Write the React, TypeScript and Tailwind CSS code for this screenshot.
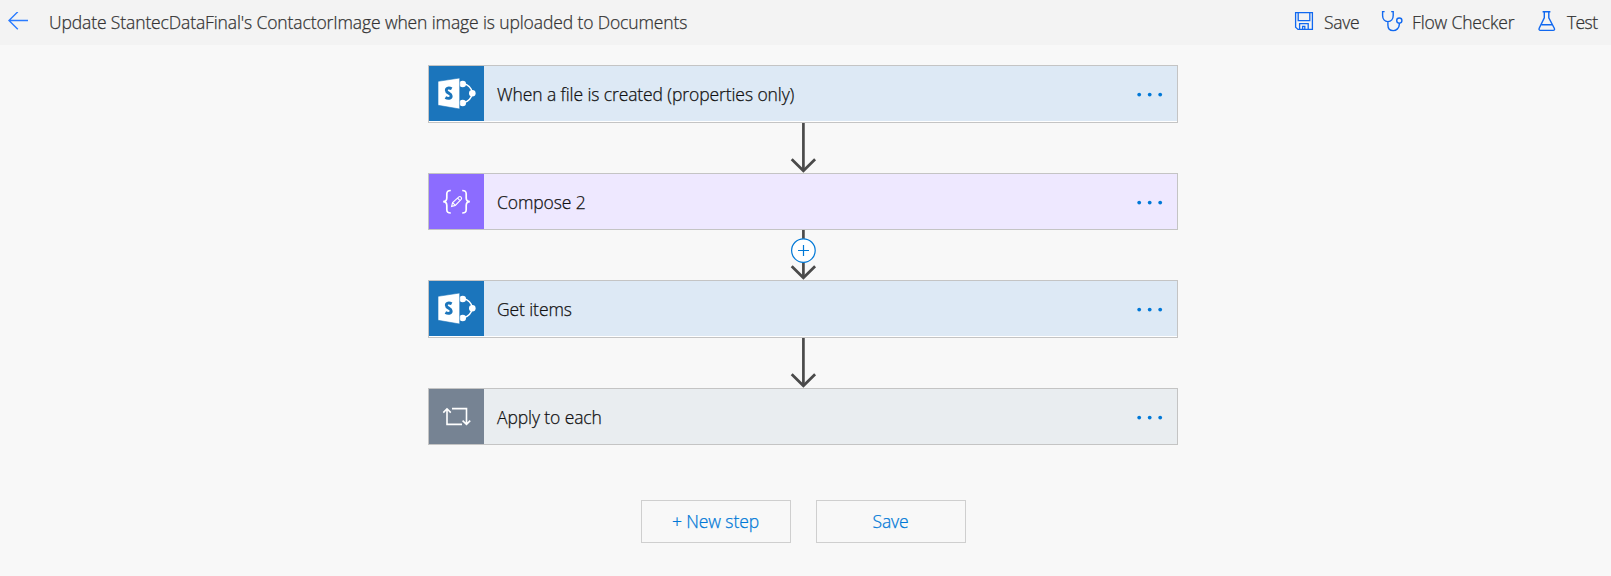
import React from "react";

function SharePointIcon() {
  return (
    <svg width="55" height="55" viewBox="0 0 55 55" fill="none">
      <path d="M34 17.5C39 18.5 42.5 22 43.5 27C42.5 32 39 36 34 37" stroke="#fff" strokeWidth="1.3" />
      <circle cx="33.7" cy="18" r="3.3" fill="#fff" />
      <circle cx="43.3" cy="27.3" r="3.3" fill="#fff" />
      <circle cx="33.7" cy="37" r="3.3" fill="#fff" />
      <path d="M9 15.3L30.7 12V43L9 39.3Z" fill="#fff" stroke="#1b75bc" strokeWidth="0.6" />
      <path d="M22.7 22.8C20 21.4 17.3 21.9 17.3 24.2C17.3 27.4 22.2 26.8 22.2 30C22.2 32.6 19 33 16.4 31.5" stroke="#1b75bc" strokeWidth="2.9" />
    </svg>
  );
}

function ComposeIcon() {
  return (
    <svg width="55" height="55" viewBox="0 0 55 55" fill="none" stroke="#fff">
      <path d="M21.8 16.5C18.5 16.5 17.8 17.5 17.8 20V24C17.8 26.5 16.8 27.5 14.2 27.7C16.8 27.9 17.8 29 17.8 31.5V35.5C17.8 38 18.5 39 21.8 39" strokeWidth="1.7" />
      <path d="M33.2 16.5C36.5 16.5 37.2 17.5 37.2 20V24C37.2 26.5 38.2 27.5 40.8 27.7C38.2 27.9 37.2 29 37.2 31.5V35.5C37.2 38 36.5 39 33.2 39" strokeWidth="1.7" />
      <path d="M22.6 32.4L23.6 28.6L29.9 22.9C31.3 21.8 33.5 23.8 32.2 25.4L26.3 31.4ZM23.6 28.6L26.3 31.4M28.6 24.1L31 26.6" strokeWidth="1.1" />
    </svg>
  );
}

function LoopIcon() {
  return (
    <svg width="55" height="55" viewBox="0 0 55 55" fill="none" stroke="#fff" strokeWidth="1.6">
      <path d="M18 20V35.4H33M14.3 23.6L18 19.8L21.8 23.6M23 19.6H37.5V35M33.6 31.6L37.5 35.4L41.2 31.6" />
    </svg>
  );
}

function Connector({ insert = false }: { insert?: boolean }) {
  return (
    <div className="flex h-[50px] justify-center">
      <svg width="30" height="50" viewBox="0 0 30 50" fill="none">
        <path d="M15.4 0V48" stroke="#4a4a4a" strokeWidth="2.7" />
        <path d="M3.7 36.2L15.4 47.8L27.1 36.2" stroke="#4a4a4a" strokeWidth="2.7" />
        {insert && (
          <g stroke="#0078d7">
            <circle cx="15.4" cy="20.6" r="11.8" fill="#fff" strokeWidth="1.2" />
            <path d="M15.5 15V26M10 20.5H21" strokeWidth="1.2" />
          </g>
        )}
      </svg>
    </div>
  );
}

type StepProps = { icon: React.ReactNode; tile: string; body: string; children: React.ReactNode };

function Step({ icon, tile, body, children }: StepProps) {
  return (
    <div className="border border-[#c4c4c4] bg-white">
      <div className={`flex h-[55px] items-center ${body}`}>
        <div className={`h-[55px] w-[55px] ${tile}`}>{icon}</div>
        <div className="ml-[13px] flex-1 tracking-[-0.1px] text-[#111]">{children}</div>
        <svg className="mt-[2px] mr-[13px]" width="28" height="6" viewBox="0 0 28 6" fill="#0078d7">
          <circle cx="3.2" cy="2.6" r="1.9" />
          <circle cx="13.7" cy="2.6" r="1.9" />
          <circle cx="24.2" cy="2.6" r="1.9" />
        </svg>
      </div>
    </div>
  );
}

export default function App() {
  return (
    <div className="h-[576px] w-full overflow-hidden bg-[#f8f8f8] font-['Open_Sans',sans-serif] text-[17.5px] leading-6 font-light [-webkit-text-stroke:0.25px]">
      <header className="flex h-[45px] items-center bg-[#f3f3f3] pb-[2px] text-[#333]">
        <svg className="mt-px ml-2" width="21" height="20" viewBox="0 0 21 20" fill="none" stroke="#2a7bff" strokeWidth="1.4">
          <path d="M20 8.5H1M9.8 -0.2L1 8.5L9.8 17.2" />
        </svg>
        <h1 className="ml-[20px] flex-1 font-light tracking-[-0.12px] whitespace-nowrap">
          Update StantecDataFinal's ContactorImage when image is uploaded to Documents
        </h1>
        <div className="flex w-[317px] items-center tracking-[-0.3px]">
          <svg className="mt-px" width="20" height="20" viewBox="0 0 20 20" fill="none" stroke="#1068f0" strokeWidth="1.3">
            <path d="M1.6 0.6H18.4V17.4H4L1.6 15.2ZM4.2 0.6V8.6H15.8V0.6M5.6 17.4V11.6H14.2V17.4M8.6 17.4V14.4H10.8V17.4" />
          </svg>
          <span className="ml-[10px] w-[57px]">Save</span>
          <svg className="-mt-[2px]" width="22" height="22" viewBox="0 0 22 22" fill="none" stroke="#1068f0" strokeWidth="1.4">
            <path d="M3.6 1.6H1.6V5.6C1.6 9 3.6 11.6 6.9 11.6S12.2 9 12.2 5.6V1.6H10.2M6.9 11.6V15C6.9 18.5 9 20.6 12.2 20.6S18.3 18 18.3 14.6V13.3" />
            <circle cx="18.3" cy="10.6" r="2.6" />
          </svg>
          <span className="ml-[9px] w-[126px] tracking-[-0.15px] whitespace-nowrap">Flow Checker</span>
          <svg className="-mt-[2px]" width="18" height="22" viewBox="0 0 18 22" fill="none" stroke="#1068f0" strokeWidth="1.4">
            <path d="M4.6 1.7H12.4M6.3 1.7V7.8L1.2 18.2C0.7 19.5 1.2 20.4 2.4 20.4H15.2C16.4 20.4 16.9 19.5 16.3 18.2L10.8 7.8V1.7M3.6 14.8H14" />
          </svg>
          <span className="ml-[11px] tracking-[-0.6px]">Test</span>
        </div>
      </header>
      <main className="ml-[428px] w-[750px] pt-[20px]">
        <Step icon={<SharePointIcon />} tile="bg-[#1b75bc]" body="bg-[#dde9f5] mb-px">
          When a file is created (properties only)
        </Step>
        <Connector />
        <Step icon={<ComposeIcon />} tile="bg-[#8c6cff]" body="bg-[#eee8ff]">
          Compose 2
        </Step>
        <Connector insert />
        <Step icon={<SharePointIcon />} tile="bg-[#1b75bc]" body="bg-[#dde9f5] mb-px">
          Get items
        </Step>
        <Connector />
        <Step icon={<LoopIcon />} tile="bg-[#768393]" body="bg-[#e9edf0]">
          Apply to each
        </Step>
        <div className="mt-[55px] flex justify-center gap-[25px] tracking-[-0.1px] text-[#0078d7]">
          <button className="h-[43px] w-[150px] border border-[#cfcfcf] pb-[2px]">+ New step</button>
          <button className="h-[43px] w-[150px] border border-[#cfcfcf] pb-[2px]">Save</button>
        </div>
      </main>
    </div>
  );
}
